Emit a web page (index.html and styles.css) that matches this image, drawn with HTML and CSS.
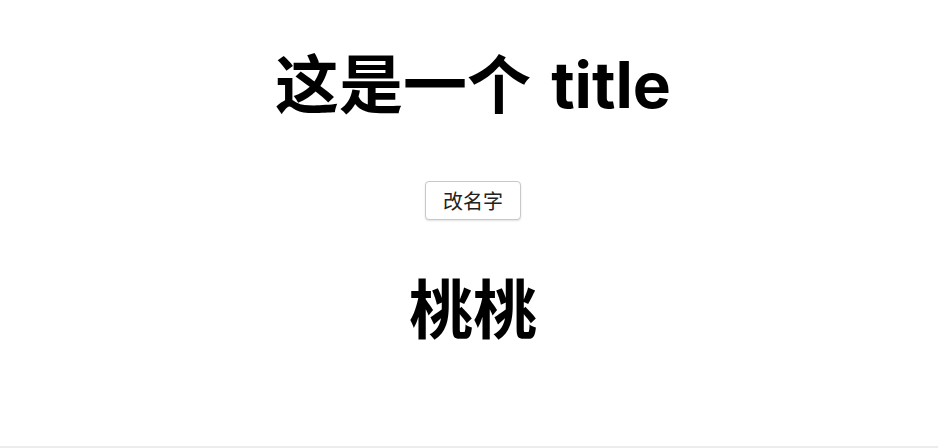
FILE: index.html
```html
<!DOCTYPE html>
<html lang="zh">
<head>
<meta charset="utf-8">
<title>title</title>
<link rel="stylesheet" href="styles.css">
</head>
<body>
<main class="page">
  <h1 class="title">这是一个 title</h1>
  <button class="btn" type="button">改名字</button>
  <h1 class="name">桃桃</h1>
</main>
</body>
</html>
```
FILE: styles.css
```css
html, body {
  margin: 0;
  padding: 0;
  height: 100%;
  background: #fff;
}
body {
  box-sizing: border-box;
  border-bottom: 2px solid #ececec;
  font-family: "Inter", "Noto Sans CJK SC", sans-serif;
  color: #000;
}
.page {
  display: flex;
  flex-direction: column;
  align-items: center;
  padding-top: 47px;
  padding-left: 8px;
}
.title, .name {
  margin: 0;
  font-size: 64px;
  line-height: 76px;
  font-weight: 700;
}
.title {
  word-spacing: 5px;
}
.btn {
  margin-top: 58px;
  height: 39px;
  padding: 0 17px;
  font-family: "Liberation Sans", "Noto Sans CJK SC", sans-serif;
  font-size: 20px;
  color: #222;
  background: #fff;
  border: 1px solid #c8c8c8;
  border-radius: 4px;
  box-shadow: 0 1px 2px rgba(0,0,0,0.12);
}
.name {
  margin-top: 52px;
}
```
